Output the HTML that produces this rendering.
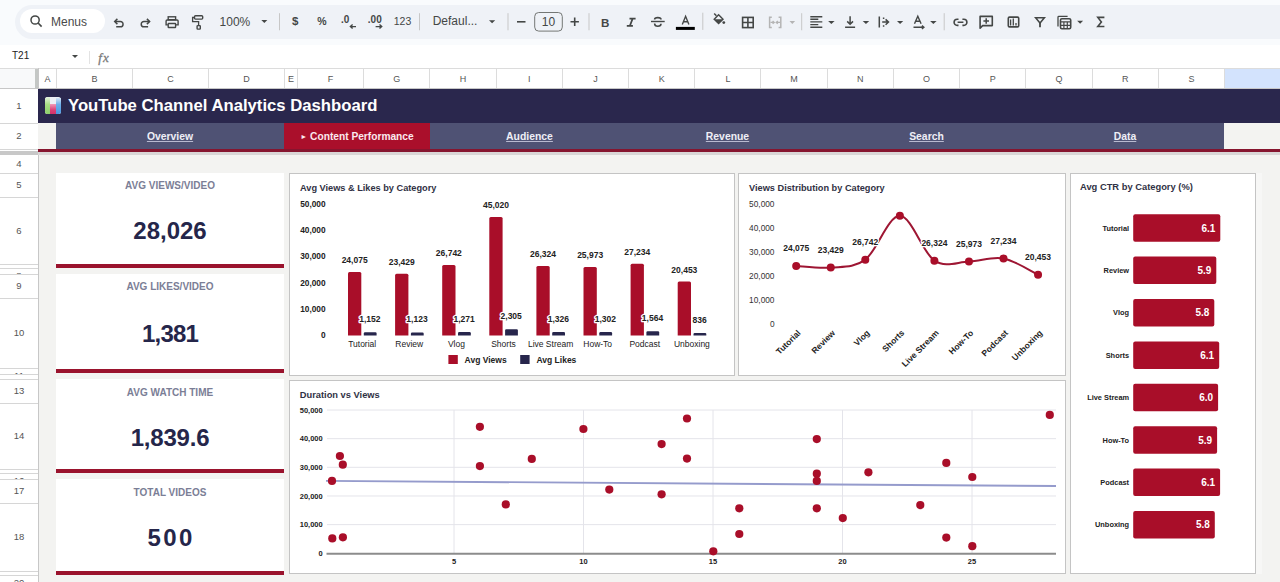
<!DOCTYPE html><html><head><meta charset="utf-8"><style>
*{margin:0;padding:0;box-sizing:border-box}
html,body{width:1280px;height:582px;overflow:hidden;background:#f9fbfd;font-family:"Liberation Sans", sans-serif;}
.a{position:absolute}
</style></head><body><div class="a" style="left:15px;top:5px;width:1280px;height:34px;background:#eff2f7;border-radius:17px 0 0 17px"></div><div class="a" style="left:20px;top:9px;width:85px;height:24px;background:#fff;border-radius:12px"></div><div class="a" style="left:51px;top:15px;font-size:12px;color:#4a4a4a;line-height:14px">Menus</div><svg class="a" style="left:0;top:0" width="1280" height="45" viewBox="0 0 1280 45" font-family="Liberation Sans, sans-serif"><circle cx="35.1" cy="20" r="4.1" fill="none" stroke="#444746" stroke-width="1.5"/><line x1="38.1" y1="23" x2="41.6" y2="26.6" stroke="#444746" stroke-width="1.6"/><path d="M117.4,18.9 L114.7,21.5 L117.4,24.1" fill="none" stroke="#444746" stroke-width="1.5"/><path d="M115,21.5 H120.4 A2.65,2.65 0 0 1 120.4,26.8 H116.2" fill="none" stroke="#444746" stroke-width="1.5"/><path d="M146.9,18.9 L149.6,21.5 L146.9,24.1" fill="none" stroke="#444746" stroke-width="1.5"/><path d="M149.3,21.5 H143.9 A2.65,2.65 0 0 0 143.9,26.8 H148.1" fill="none" stroke="#444746" stroke-width="1.5"/><rect x="168.2" y="16.8" width="7.4" height="2.9" fill="none" stroke="#444746" stroke-width="1.4"/><path d="M167.9,24.9 H166.1 V21.1 Q166.1,20 167.2,20 H177 Q178.1,20 178.1,21.1 V24.9 H176" fill="none" stroke="#444746" stroke-width="1.4"/><rect x="168.2" y="23.5" width="7.4" height="4" rx="0.5" fill="#eff2f7" stroke="#444746" stroke-width="1.4"/><rect x="194.5" y="15.8" width="8.2" height="3.3" rx="1" fill="none" stroke="#444746" stroke-width="1.4"/><path d="M194.5,17.5 H192.6 V21.7 H198.6 V25.4" fill="none" stroke="#444746" stroke-width="1.3"/><rect x="197.1" y="25.6" width="3.2" height="3.5" rx="0.6" fill="none" stroke="#444746" stroke-width="1.4"/><text x="219.6" y="25.9" font-size="12" fill="#444746">100%</text><path d="M261.3,20.1 L267.3,20.1 L264.3,23.1 Z" fill="#444746"/><line x1="279.5" y1="13.2" x2="279.5" y2="30.3" stroke="#c7c7c7" stroke-width="1"/><text x="295.2" y="25.2" font-size="11.5" font-weight="bold" fill="#444746" text-anchor="middle">$</text><text x="321.9" y="24.7" font-size="10.5" font-weight="bold" fill="#444746" text-anchor="middle">%</text><text x="341" y="23" font-size="10" font-weight="bold" fill="#444746">.0</text><path d="M356,26.6 H350.5 M352.6,24.6 L350.4,26.6 L352.6,28.6" fill="none" stroke="#444746" stroke-width="1.4"/><text x="367.8" y="23" font-size="10" font-weight="bold" fill="#444746">.00</text><path d="M375.6,26.6 H381.6 M379.5,24.6 L381.7,26.6 L379.5,28.6" fill="none" stroke="#444746" stroke-width="1.4"/><text x="402.5" y="24.8" font-size="10.5" fill="#444746" text-anchor="middle">123</text><line x1="419.5" y1="13.2" x2="419.5" y2="30.3" stroke="#c7c7c7" stroke-width="1"/><text x="432.7" y="25" font-size="12" fill="#444746">Defaul...</text><path d="M489,20.3 L495.2,20.3 L492.1,23.3 Z" fill="#444746"/><line x1="508" y1="13.2" x2="508" y2="30.3" stroke="#c7c7c7" stroke-width="1"/><line x1="517" y1="21.8" x2="525.5" y2="21.8" stroke="#444746" stroke-width="1.6"/><rect x="534.7" y="12.5" width="27.6" height="18.6" rx="4" fill="none" stroke="#747775" stroke-width="1"/><text x="548.4" y="26" font-size="12" fill="#444746" text-anchor="middle">10</text><path d="M570.5,21.8 H578.9 M574.7,17.6 V26" stroke="#444746" stroke-width="1.6"/><line x1="589" y1="13.2" x2="589" y2="30.3" stroke="#c7c7c7" stroke-width="1"/><text x="605.2" y="26.5" font-size="11.6" font-weight="bold" fill="#444746" text-anchor="middle">B</text><path d="M629.5,18.7 H635.6 M626.8,25.8 H632.9 M632.6,18.7 L629.9,25.8" fill="none" stroke="#444746" stroke-width="1.8"/><path d="M651,21.5 H664.7" stroke="#444746" stroke-width="1.4"/><path d="M661,19.6 Q661,17.6 657.8,17.6 Q654.6,17.6 654.6,19.4" fill="none" stroke="#444746" stroke-width="1.6"/><path d="M654.6,23.6 Q654.6,26.3 657.8,26.3 Q661,26.3 661,23.8" fill="none" stroke="#444746" stroke-width="1.6"/><path d="M682.3,24.4 L685.6,16.3 L688.9,24.4 M683.5,21.7 H687.7" fill="none" stroke="#444746" stroke-width="1.4"/><rect x="675.9" y="26.9" width="18.9" height="3" fill="#000"/><line x1="702.8" y1="12.7" x2="702.8" y2="29.9" stroke="#c7c7c7" stroke-width="1"/><path d="M714.2,13.5 L716.4,15.7" stroke="#444746" stroke-width="1.5"/><path d="M713.2,19.2 L718.6,13.8 L724,19.2 L718.6,24.6 Z" fill="#444746"/><path d="M715.2,19.2 L718.6,15.8 L722,19.2 Z" fill="#eff2f7"/><circle cx="723.8" cy="22.6" r="1.4" fill="#444746"/><rect x="742.6" y="17.4" width="10.6" height="10.2" fill="none" stroke="#444746" stroke-width="1.6"/><path d="M747.9,17.4 V27.6 M742.6,22.5 H753.2" stroke="#444746" stroke-width="1.6"/><path d="M771.8,17.2 H769.6 V27.6 H771.8 M778.6,17.2 H780.8 V27.6 H778.6" fill="none" stroke="#b4b4b4" stroke-width="1.5"/><path d="M770.5,22.4 H774 M772.6,21 L774.2,22.4 L772.6,23.8 M780,22.4 H776.4 M777.8,21 L776.2,22.4 L777.8,23.8" fill="none" stroke="#b4b4b4" stroke-width="1.3"/><path d="M789.5,20.9 L795.1,20.9 L792.3,23.9 Z" fill="#b4b4b4"/><line x1="801.7" y1="13.2" x2="801.7" y2="30.3" stroke="#c7c7c7" stroke-width="1"/><path d="M810.3,16.8 H822.3 M810.3,19.3 H818.3 M810.3,21.9 H822.3 M810.3,24.6 H818.3 M810.3,27.2 H822.3" stroke="#444746" stroke-width="1.4"/><path d="M828.1,20.9 L834.6,20.9 L831.35,23.9 Z" fill="#444746"/><path d="M845.1,27.2 H855.1 M850.1,16.2 V24.3 M847.2,21.4 L850.1,24.3 L853,21.4" fill="none" stroke="#444746" stroke-width="1.5"/><path d="M862.7,20.9 L869.2,20.9 L865.95,23.9 Z" fill="#444746"/><path d="M879.3,16.6 V27.6 M882.2,22.1 H888.3 M885.6,19.4 L888.5,22.1 L885.6,24.8 M883.6,17.4 V19 M883.6,25.2 V26.8" fill="none" stroke="#444746" stroke-width="1.5"/><path d="M897,20.9 L903.2,20.9 L900.1,23.9 Z" fill="#444746"/><path d="M914.5,23.7 L917.8,16.2 L921.1,23.7 M915.7,21.2 H919.9 M913.5,27.3 H923.6 M921.9,25.6 L923.9,27.3 L921.9,29" fill="none" stroke="#444746" stroke-width="1.4"/><path d="M930.1,20.9 L936.6,20.9 L933.35,23.9 Z" fill="#444746"/><line x1="944.2" y1="13.2" x2="944.2" y2="30.3" stroke="#c7c7c7" stroke-width="1"/><path d="M958.5,19.2 H957.2 A3.1,3.1 0 0 0 957.2,25.4 H958.5 M962.4,19.2 H963.8 A3.1,3.1 0 0 1 963.8,25.4 H962.4 M957.6,22.3 H963.4" fill="none" stroke="#444746" stroke-width="1.6"/><path d="M980.1,28.2 V16.4 H992.3 V25.6 H982.6 Z" fill="none" stroke="#444746" stroke-width="1.6" stroke-linejoin="round"/><path d="M983.4,21 H989 M986.2,18.2 V23.8" stroke="#444746" stroke-width="1.5"/><rect x="1008.3" y="17.1" width="10.4" height="9.8" rx="1.2" fill="none" stroke="#444746" stroke-width="1.6"/><path d="M1010.6,19.6 V25.4 M1013.3,18.6 V25.4 M1016,23 V25.4" stroke="#444746" stroke-width="1.3"/><path d="M1035.6,17.8 H1044.4 L1040,23 Z" fill="none" stroke="#444746" stroke-width="1.5" stroke-linejoin="miter"/><path d="M1040,22.6 V27.2" stroke="#444746" stroke-width="1.8"/><path d="M1058,26.4 V17.2 Q1058,16.4 1058.8,16.4 H1067.6" fill="none" stroke="#444746" stroke-width="1.3"/><rect x="1060.5" y="18.7" width="10.2" height="10" rx="1.4" fill="none" stroke="#444746" stroke-width="1.6"/><path d="M1060.5,21.9 H1070.7 M1060.5,25.4 H1070.7 M1063.9,21.9 V28.7 M1067.3,21.9 V28.7" stroke="#444746" stroke-width="1.2"/><path d="M1077.1,20.7 L1083.1,20.7 L1080.1,23.7 Z" fill="#444746"/><path d="M1104.4,17.4 H1097.8 L1101.4,22 L1097.8,26.5 H1104.4" fill="none" stroke="#444746" stroke-width="1.6"/></svg><div class="a" style="left:0;top:45px;width:1280px;height:23px;background:#fff"></div><div class="a" style="left:12px;top:50px;font-size:10px;color:#222;line-height:12px">T21</div><div class="a" style="left:89px;top:51px;width:1px;height:13px;background:#e3e3e3"></div><svg class="a" style="left:0;top:45px" width="140" height="23" viewBox="0 45 140 23"><path d="M72,55 H78 L75,58 Z" fill="#444746"/><text x="98.3" y="62" font-family="Liberation Serif, serif" font-style="italic" font-size="13" letter-spacing="1.2" stroke="#7a7a7a" stroke-width="0.3" fill="#7a7a7a">fx</text></svg><div class="a" style="left:0;top:68px;width:1280px;height:21px;background:#fff;border-top:1px solid #dcdcdc"></div><div class="a" style="left:0;top:69px;width:35px;height:20px;background:#f8f9fa"></div><div class="a" style="left:35px;top:69px;width:3px;height:20px;background:#c4c7c5"></div><div class="a" style="left:1224px;top:69px;width:56px;height:20px;background:#d3e3fd"></div><div class="a" style="left:56px;top:69px;width:1px;height:20px;background:#dcdcdc"></div><div class="a" style="left:38.5px;top:72.5px;width:18.0px;text-align:center;font-size:9px;line-height:12px;color:#555">A</div><div class="a" style="left:132px;top:69px;width:1px;height:20px;background:#dcdcdc"></div><div class="a" style="left:56.5px;top:72.5px;width:76.0px;text-align:center;font-size:9px;line-height:12px;color:#555">B</div><div class="a" style="left:208px;top:69px;width:1px;height:20px;background:#dcdcdc"></div><div class="a" style="left:132.5px;top:72.5px;width:76.0px;text-align:center;font-size:9px;line-height:12px;color:#555">C</div><div class="a" style="left:284px;top:69px;width:1px;height:20px;background:#dcdcdc"></div><div class="a" style="left:208.5px;top:72.5px;width:76.0px;text-align:center;font-size:9px;line-height:12px;color:#555">D</div><div class="a" style="left:297px;top:69px;width:1px;height:20px;background:#dcdcdc"></div><div class="a" style="left:284.5px;top:72.5px;width:13.0px;text-align:center;font-size:9px;line-height:12px;color:#555">E</div><div class="a" style="left:363px;top:69px;width:1px;height:20px;background:#dcdcdc"></div><div class="a" style="left:297.5px;top:72.5px;width:66.2px;text-align:center;font-size:9px;line-height:12px;color:#555">F</div><div class="a" style="left:429px;top:69px;width:1px;height:20px;background:#dcdcdc"></div><div class="a" style="left:363.7px;top:72.5px;width:66.2px;text-align:center;font-size:9px;line-height:12px;color:#555">G</div><div class="a" style="left:496px;top:69px;width:1px;height:20px;background:#dcdcdc"></div><div class="a" style="left:429.9px;top:72.5px;width:66.2px;text-align:center;font-size:9px;line-height:12px;color:#555">H</div><div class="a" style="left:562px;top:69px;width:1px;height:20px;background:#dcdcdc"></div><div class="a" style="left:496.1px;top:72.5px;width:66.2px;text-align:center;font-size:9px;line-height:12px;color:#555">I</div><div class="a" style="left:628px;top:69px;width:1px;height:20px;background:#dcdcdc"></div><div class="a" style="left:562.4px;top:72.5px;width:66.2px;text-align:center;font-size:9px;line-height:12px;color:#555">J</div><div class="a" style="left:694px;top:69px;width:1px;height:20px;background:#dcdcdc"></div><div class="a" style="left:628.6px;top:72.5px;width:66.2px;text-align:center;font-size:9px;line-height:12px;color:#555">K</div><div class="a" style="left:760px;top:69px;width:1px;height:20px;background:#dcdcdc"></div><div class="a" style="left:694.8px;top:72.5px;width:66.2px;text-align:center;font-size:9px;line-height:12px;color:#555">L</div><div class="a" style="left:827px;top:69px;width:1px;height:20px;background:#dcdcdc"></div><div class="a" style="left:761.0px;top:72.5px;width:66.2px;text-align:center;font-size:9px;line-height:12px;color:#555">M</div><div class="a" style="left:893px;top:69px;width:1px;height:20px;background:#dcdcdc"></div><div class="a" style="left:827.2px;top:72.5px;width:66.2px;text-align:center;font-size:9px;line-height:12px;color:#555">N</div><div class="a" style="left:959px;top:69px;width:1px;height:20px;background:#dcdcdc"></div><div class="a" style="left:893.4px;top:72.5px;width:66.2px;text-align:center;font-size:9px;line-height:12px;color:#555">O</div><div class="a" style="left:1025px;top:69px;width:1px;height:20px;background:#dcdcdc"></div><div class="a" style="left:959.6px;top:72.5px;width:66.2px;text-align:center;font-size:9px;line-height:12px;color:#555">P</div><div class="a" style="left:1092px;top:69px;width:1px;height:20px;background:#dcdcdc"></div><div class="a" style="left:1025.9px;top:72.5px;width:66.2px;text-align:center;font-size:9px;line-height:12px;color:#555">Q</div><div class="a" style="left:1158px;top:69px;width:1px;height:20px;background:#dcdcdc"></div><div class="a" style="left:1092.1px;top:72.5px;width:66.2px;text-align:center;font-size:9px;line-height:12px;color:#555">R</div><div class="a" style="left:1224px;top:69px;width:1px;height:20px;background:#dcdcdc"></div><div class="a" style="left:1158.3px;top:72.5px;width:66.2px;text-align:center;font-size:9px;line-height:12px;color:#555">S</div><div class="a" style="left:1280px;top:69px;width:1px;height:20px;background:#dcdcdc"></div><div class="a" style="left:38px;top:89px;width:1242px;height:493px;background:#f3f3f1"></div><div class="a" style="left:0;top:89px;width:38px;height:493px;background:#fff"></div><div class="a" style="left:38px;top:68px;width:1px;height:514px;background:#c7c7c7"></div><div class="a" style="left:0;top:89px;width:38px;height:34px;overflow:hidden"><div class="a" style="left:0;top:11.0px;width:38px;text-align:center;font-size:9.5px;line-height:12px;color:#555">1</div></div><div class="a" style="left:0;top:123px;width:38px;height:1px;background:#d6d6d6"></div><div class="a" style="left:0;top:123px;width:38px;height:26px;overflow:hidden"><div class="a" style="left:0;top:7.0px;width:38px;text-align:center;font-size:9.5px;line-height:12px;color:#555">2</div></div><div class="a" style="left:0;top:149px;width:38px;height:1px;background:#d6d6d6"></div><div class="a" style="left:0;top:155px;width:38px;height:18px;overflow:hidden"><div class="a" style="left:0;top:3.0px;width:38px;text-align:center;font-size:9.5px;line-height:12px;color:#555">4</div></div><div class="a" style="left:0;top:173px;width:38px;height:1px;background:#d6d6d6"></div><div class="a" style="left:0;top:173px;width:38px;height:24px;overflow:hidden"><div class="a" style="left:0;top:6.0px;width:38px;text-align:center;font-size:9.5px;line-height:12px;color:#555">5</div></div><div class="a" style="left:0;top:197px;width:38px;height:1px;background:#d6d6d6"></div><div class="a" style="left:0;top:197px;width:38px;height:67px;overflow:hidden"><div class="a" style="left:0;top:27.5px;width:38px;text-align:center;font-size:9.5px;line-height:12px;color:#555">6</div></div><div class="a" style="left:0;top:264px;width:38px;height:1px;background:#d6d6d6"></div><div class="a" style="left:0;top:264px;width:38px;height:4px;overflow:hidden"><div class="a" style="left:0;top:1.5px;width:38px;text-align:center;font-size:9.5px;line-height:12px;color:#555">7</div></div><div class="a" style="left:0;top:268px;width:38px;height:1px;background:#d6d6d6"></div><div class="a" style="left:0;top:268px;width:38px;height:6px;overflow:hidden"><div class="a" style="left:0;top:1.5px;width:38px;text-align:center;font-size:9.5px;line-height:12px;color:#555">8</div></div><div class="a" style="left:0;top:274px;width:38px;height:1px;background:#d6d6d6"></div><div class="a" style="left:0;top:274px;width:38px;height:24px;overflow:hidden"><div class="a" style="left:0;top:6.0px;width:38px;text-align:center;font-size:9.5px;line-height:12px;color:#555">9</div></div><div class="a" style="left:0;top:298px;width:38px;height:1px;background:#d6d6d6"></div><div class="a" style="left:0;top:298px;width:38px;height:70px;overflow:hidden"><div class="a" style="left:0;top:29.0px;width:38px;text-align:center;font-size:9.5px;line-height:12px;color:#555">10</div></div><div class="a" style="left:0;top:368px;width:38px;height:1px;background:#d6d6d6"></div><div class="a" style="left:0;top:368px;width:38px;height:6px;overflow:hidden"><div class="a" style="left:0;top:1.5px;width:38px;text-align:center;font-size:9.5px;line-height:12px;color:#555">11</div></div><div class="a" style="left:0;top:374px;width:38px;height:1px;background:#d6d6d6"></div><div class="a" style="left:0;top:374px;width:38px;height:5px;overflow:hidden"><div class="a" style="left:0;top:1.5px;width:38px;text-align:center;font-size:9.5px;line-height:12px;color:#555">12</div></div><div class="a" style="left:0;top:379px;width:38px;height:1px;background:#d6d6d6"></div><div class="a" style="left:0;top:379px;width:38px;height:24px;overflow:hidden"><div class="a" style="left:0;top:6.0px;width:38px;text-align:center;font-size:9.5px;line-height:12px;color:#555">13</div></div><div class="a" style="left:0;top:403px;width:38px;height:1px;background:#d6d6d6"></div><div class="a" style="left:0;top:403px;width:38px;height:66px;overflow:hidden"><div class="a" style="left:0;top:27.0px;width:38px;text-align:center;font-size:9.5px;line-height:12px;color:#555">14</div></div><div class="a" style="left:0;top:469px;width:38px;height:1px;background:#d6d6d6"></div><div class="a" style="left:0;top:469px;width:38px;height:4px;overflow:hidden"><div class="a" style="left:0;top:1.5px;width:38px;text-align:center;font-size:9.5px;line-height:12px;color:#555">15</div></div><div class="a" style="left:0;top:473px;width:38px;height:1px;background:#d6d6d6"></div><div class="a" style="left:0;top:473px;width:38px;height:6px;overflow:hidden"><div class="a" style="left:0;top:1.5px;width:38px;text-align:center;font-size:9.5px;line-height:12px;color:#555">16</div></div><div class="a" style="left:0;top:479px;width:38px;height:1px;background:#d6d6d6"></div><div class="a" style="left:0;top:479px;width:38px;height:24px;overflow:hidden"><div class="a" style="left:0;top:6.0px;width:38px;text-align:center;font-size:9.5px;line-height:12px;color:#555">17</div></div><div class="a" style="left:0;top:503px;width:38px;height:1px;background:#d6d6d6"></div><div class="a" style="left:0;top:503px;width:38px;height:68px;overflow:hidden"><div class="a" style="left:0;top:28.0px;width:38px;text-align:center;font-size:9.5px;line-height:12px;color:#555">18</div></div><div class="a" style="left:0;top:571px;width:38px;height:1px;background:#d6d6d6"></div><div class="a" style="left:0;top:571px;width:38px;height:4px;overflow:hidden"><div class="a" style="left:0;top:1.5px;width:38px;text-align:center;font-size:9.5px;line-height:12px;color:#555">19</div></div><div class="a" style="left:0;top:575px;width:38px;height:1px;background:#d6d6d6"></div><div class="a" style="left:0;top:575px;width:38px;height:16px;overflow:hidden"><div class="a" style="left:0;top:2.0px;width:38px;text-align:center;font-size:9.5px;line-height:12px;color:#555">20</div></div><div class="a" style="left:0;top:591px;width:38px;height:1px;background:#d6d6d6"></div><div class="a" style="left:0;top:151px;width:38px;height:4px;background:#c8c8c8"></div><div class="a" style="left:0;top:88px;width:1280px;height:1px;background:#c7c7c7"></div><div class="a" style="left:38px;top:89px;width:1242px;height:34px;background:#2a274d"></div><div class="a" style="left:68px;top:96px;font-size:16.7px;font-weight:bold;color:#fff;line-height:20px;white-space:nowrap">YouTube Channel Analytics Dashboard</div><div class="a" style="left:45px;top:97px;width:16px;height:17px;border-radius:2.5px;overflow:hidden;background:#eef0f6"><div class="a" style="left:0;top:0;width:5.4px;height:17px;background:linear-gradient(180deg,#e6f2e0 0%,#a8dc84 45%,#8ccf6a 100%)"></div><div class="a" style="left:5.4px;top:7px;width:5.3px;height:10px;background:linear-gradient(180deg,#f29ab8 0%,#dc3f76 60%,#d0336a 100%)"></div><div class="a" style="left:10.7px;top:1px;width:5.3px;height:16px;background:linear-gradient(180deg,#d6e6f6 0%,#6fb0ea 40%,#4a98e0 100%)"></div></div><div class="a" style="left:38px;top:123px;width:18px;height:26px;background:#f3f3f1"></div><div class="a" style="left:56px;top:123px;width:1168px;height:26px;background:#4f5274"></div><div class="a" style="left:1224px;top:123px;width:56px;height:26px;background:#f3f3f1"></div><div class="a" style="left:284px;top:123px;width:146px;height:28px;background:#aa0f2b"></div><div class="a" style="left:38px;top:149px;width:1242px;height:3px;background:#86152f"></div><div class="a" style="left:38px;top:152px;width:1242px;height:3px;background:#d9d6d6"></div><div class="a" style="left:56px;top:130.4px;width:228px;text-align:center;font-size:10.4px;font-weight:bold;line-height:13px;color:#eeeef6;text-decoration:underline;text-decoration-color:#b9bad0">Overview</div><div class="a" style="left:430px;top:130.4px;width:199px;text-align:center;font-size:10.4px;font-weight:bold;line-height:13px;color:#eeeef6;text-decoration:underline;text-decoration-color:#b9bad0">Audience</div><div class="a" style="left:628px;top:130.4px;width:199px;text-align:center;font-size:10.4px;font-weight:bold;line-height:13px;color:#eeeef6;text-decoration:underline;text-decoration-color:#b9bad0">Revenue</div><div class="a" style="left:827px;top:130.4px;width:199px;text-align:center;font-size:10.4px;font-weight:bold;line-height:13px;color:#eeeef6;text-decoration:underline;text-decoration-color:#b9bad0">Search</div><div class="a" style="left:1026px;top:130.4px;width:198px;text-align:center;font-size:10.4px;font-weight:bold;line-height:13px;color:#eeeef6;text-decoration:underline;text-decoration-color:#b9bad0">Data</div><div class="a" style="left:284px;top:130px;width:146px;text-align:center;font-size:10.2px;font-weight:bold;line-height:13px;color:#fbe9ee;white-space:nowrap"><span style="font-size:7px;position:relative;top:-1px">&#9658;</span> Content Performance</div><div class="a" style="left:1256px;top:173px;width:6px;height:401px;background:#f7f7f6"></div><div class="a" style="left:56px;top:173px;width:228px;height:91px;background:#fff"></div><div class="a" style="left:56px;top:264px;width:228px;height:4px;background:#9a132d"></div><div class="a" style="left:56px;top:180.0px;width:228px;text-align:center;font-size:10px;font-weight:bold;line-height:12px;color:#7b7e96">AVG VIEWS/VIDEO</div><div class="a" style="left:56px;top:216.5px;width:228px;padding-left:0.0px;letter-spacing:0.0px;text-align:center;font-size:24px;font-weight:bold;line-height:28px;color:#25264a">28,026</div><div class="a" style="left:56px;top:274px;width:228px;height:95px;background:#fff"></div><div class="a" style="left:56px;top:369px;width:228px;height:4px;background:#9a132d"></div><div class="a" style="left:56px;top:281.0px;width:228px;text-align:center;font-size:10px;font-weight:bold;line-height:12px;color:#7b7e96">AVG LIKES/VIDEO</div><div class="a" style="left:56px;top:320.3px;width:228px;padding-left:-0.8px;letter-spacing:-0.8px;text-align:center;font-size:24px;font-weight:bold;line-height:28px;color:#25264a">1,381</div><div class="a" style="left:56px;top:379px;width:228px;height:90px;background:#fff"></div><div class="a" style="left:56px;top:469px;width:228px;height:4px;background:#9a132d"></div><div class="a" style="left:56px;top:387.0px;width:228px;text-align:center;font-size:10px;font-weight:bold;line-height:12px;color:#7b7e96">AVG WATCH TIME</div><div class="a" style="left:56px;top:423.7px;width:228px;padding-left:-0.2px;letter-spacing:-0.2px;text-align:center;font-size:24px;font-weight:bold;line-height:28px;color:#25264a">1,839.6</div><div class="a" style="left:56px;top:479px;width:228px;height:92px;background:#fff"></div><div class="a" style="left:56px;top:571px;width:228px;height:4px;background:#9a132d"></div><div class="a" style="left:56px;top:486.5px;width:228px;text-align:center;font-size:10px;font-weight:bold;line-height:12px;color:#7b7e96">TOTAL VIDEOS</div><div class="a" style="left:56px;top:523.7px;width:228px;padding-left:2.4px;letter-spacing:2.4px;text-align:center;font-size:24px;font-weight:bold;line-height:28px;color:#25264a">500</div><svg class="a" style="left:0;top:0" width="1280" height="582" viewBox="0 0 1280 582" font-family="Liberation Sans, sans-serif"><rect x="289.5" y="173.5" width="445" height="202" fill="#fff" stroke="#c4c4c4" stroke-width="1"/><text x="300.00" y="190.90" font-size="9.2" font-weight="bold" fill="#303144" text-anchor="start" >Avg Views &amp; Likes by Category</text><text x="325.60" y="206.80" font-size="8.3" font-weight="bold" fill="#222" text-anchor="end" >50,000</text><text x="325.60" y="233.12" font-size="8.3" font-weight="bold" fill="#222" text-anchor="end" >40,000</text><text x="325.60" y="259.44" font-size="8.3" font-weight="bold" fill="#222" text-anchor="end" >30,000</text><text x="325.60" y="285.76" font-size="8.3" font-weight="bold" fill="#222" text-anchor="end" >20,000</text><text x="325.60" y="312.08" font-size="8.3" font-weight="bold" fill="#222" text-anchor="end" >10,000</text><text x="325.60" y="338.40" font-size="8.3" font-weight="bold" fill="#222" text-anchor="end" >0</text><path d="M348.00,335.4 V273.53 Q348.00,272.03 349.50,272.03 H359.80 Q361.30,272.03 361.30,273.53 V335.4 Z" fill="#a90e29"/><path d="M363.80,335.4 V333.57 Q363.80,332.37 365.00,332.37 H375.40 Q376.60,332.37 376.60,333.57 V335.4 Z" fill="#27264c"/><text x="354.65" y="263.03" font-size="8.5" font-weight="bold" fill="#222" text-anchor="middle" >24,075</text><text x="369.90" y="322.07" font-size="8.5" font-weight="bold" fill="#222" text-anchor="middle" stroke="#fff" stroke-width="2.5" paint-order="stroke" stroke-linejoin="round">1,152</text><text x="362.20" y="347.00" font-size="8.5" font-weight="normal" fill="#222" text-anchor="middle" >Tutorial</text><path d="M395.10,335.4 V275.23 Q395.10,273.73 396.60,273.73 H406.90 Q408.40,273.73 408.40,275.23 V335.4 Z" fill="#a90e29"/><path d="M410.90,335.4 V333.64 Q410.90,332.44 412.10,332.44 H422.50 Q423.70,332.44 423.70,333.64 V335.4 Z" fill="#27264c"/><text x="401.75" y="264.73" font-size="8.5" font-weight="bold" fill="#222" text-anchor="middle" >23,429</text><text x="417.00" y="322.14" font-size="8.5" font-weight="bold" fill="#222" text-anchor="middle" stroke="#fff" stroke-width="2.5" paint-order="stroke" stroke-linejoin="round">1,123</text><text x="409.30" y="347.00" font-size="8.5" font-weight="normal" fill="#222" text-anchor="middle" >Review</text><path d="M442.20,335.4 V266.52 Q442.20,265.02 443.70,265.02 H454.00 Q455.50,265.02 455.50,266.52 V335.4 Z" fill="#a90e29"/><path d="M458.00,335.4 V333.25 Q458.00,332.05 459.20,332.05 H469.60 Q470.80,332.05 470.80,333.25 V335.4 Z" fill="#27264c"/><text x="448.85" y="256.02" font-size="8.5" font-weight="bold" fill="#222" text-anchor="middle" >26,742</text><text x="464.10" y="321.75" font-size="8.5" font-weight="bold" fill="#222" text-anchor="middle" stroke="#fff" stroke-width="2.5" paint-order="stroke" stroke-linejoin="round">1,271</text><text x="456.40" y="347.00" font-size="8.5" font-weight="normal" fill="#222" text-anchor="middle" >Vlog</text><path d="M489.30,335.4 V218.41 Q489.30,216.91 490.80,216.91 H501.10 Q502.60,216.91 502.60,218.41 V335.4 Z" fill="#a90e29"/><path d="M505.10,335.4 V330.53 Q505.10,329.33 506.30,329.33 H516.70 Q517.90,329.33 517.90,330.53 V335.4 Z" fill="#27264c"/><text x="495.95" y="207.91" font-size="8.5" font-weight="bold" fill="#222" text-anchor="middle" >45,020</text><text x="511.20" y="319.03" font-size="8.5" font-weight="bold" fill="#222" text-anchor="middle" stroke="#fff" stroke-width="2.5" paint-order="stroke" stroke-linejoin="round">2,305</text><text x="503.50" y="347.00" font-size="8.5" font-weight="normal" fill="#222" text-anchor="middle" >Shorts</text><path d="M536.40,335.4 V267.62 Q536.40,266.12 537.90,266.12 H548.20 Q549.70,266.12 549.70,267.62 V335.4 Z" fill="#a90e29"/><path d="M552.20,335.4 V333.11 Q552.20,331.91 553.40,331.91 H563.80 Q565.00,331.91 565.00,333.11 V335.4 Z" fill="#27264c"/><text x="543.05" y="257.12" font-size="8.5" font-weight="bold" fill="#222" text-anchor="middle" >26,324</text><text x="558.30" y="321.61" font-size="8.5" font-weight="bold" fill="#222" text-anchor="middle" stroke="#fff" stroke-width="2.5" paint-order="stroke" stroke-linejoin="round">1,326</text><text x="550.60" y="347.00" font-size="8.5" font-weight="normal" fill="#222" text-anchor="middle" >Live Stream</text><path d="M583.50,335.4 V268.54 Q583.50,267.04 585.00,267.04 H595.30 Q596.80,267.04 596.80,268.54 V335.4 Z" fill="#a90e29"/><path d="M599.30,335.4 V333.17 Q599.30,331.97 600.50,331.97 H610.90 Q612.10,331.97 612.10,333.17 V335.4 Z" fill="#27264c"/><text x="590.15" y="258.04" font-size="8.5" font-weight="bold" fill="#222" text-anchor="middle" >25,973</text><text x="605.40" y="321.67" font-size="8.5" font-weight="bold" fill="#222" text-anchor="middle" stroke="#fff" stroke-width="2.5" paint-order="stroke" stroke-linejoin="round">1,302</text><text x="597.70" y="347.00" font-size="8.5" font-weight="normal" fill="#222" text-anchor="middle" >How-To</text><path d="M630.60,335.4 V265.22 Q630.60,263.72 632.10,263.72 H642.40 Q643.90,263.72 643.90,265.22 V335.4 Z" fill="#a90e29"/><path d="M646.40,335.4 V332.48 Q646.40,331.28 647.60,331.28 H658.00 Q659.20,331.28 659.20,332.48 V335.4 Z" fill="#27264c"/><text x="637.25" y="254.72" font-size="8.5" font-weight="bold" fill="#222" text-anchor="middle" >27,234</text><text x="652.50" y="320.98" font-size="8.5" font-weight="bold" fill="#222" text-anchor="middle" stroke="#fff" stroke-width="2.5" paint-order="stroke" stroke-linejoin="round">1,564</text><text x="644.80" y="347.00" font-size="8.5" font-weight="normal" fill="#222" text-anchor="middle" >Podcast</text><path d="M677.70,335.4 V283.07 Q677.70,281.57 679.20,281.57 H689.50 Q691.00,281.57 691.00,283.07 V335.4 Z" fill="#a90e29"/><path d="M693.50,335.4 V334.10 Q693.50,332.90 694.70,332.90 H705.10 Q706.30,332.90 706.30,334.10 V335.4 Z" fill="#27264c"/><text x="684.35" y="272.57" font-size="8.5" font-weight="bold" fill="#222" text-anchor="middle" >20,453</text><text x="699.60" y="322.60" font-size="8.5" font-weight="bold" fill="#222" text-anchor="middle" stroke="#fff" stroke-width="2.5" paint-order="stroke" stroke-linejoin="round">836</text><text x="691.90" y="347.00" font-size="8.5" font-weight="normal" fill="#222" text-anchor="middle" >Unboxing</text><rect x="448.4" y="355" width="9.4" height="9" fill="#a90e29"/><text x="464.60" y="362.60" font-size="8.5" font-weight="bold" fill="#222" text-anchor="start" >Avg Views</text><rect x="520.2" y="355" width="9.4" height="9" fill="#27264c"/><text x="536.50" y="362.60" font-size="8.5" font-weight="bold" fill="#222" text-anchor="start" >Avg Likes</text><rect x="738.5" y="173.5" width="327" height="202" fill="#fff" stroke="#c4c4c4" stroke-width="1"/><text x="749.10" y="191.10" font-size="9.2" font-weight="bold" fill="#303144" text-anchor="start" >Views Distribution by Category</text><text x="774.50" y="206.90" font-size="8.3" font-weight="normal" fill="#333" text-anchor="end" >50,000</text><text x="774.50" y="230.86" font-size="8.3" font-weight="normal" fill="#333" text-anchor="end" >40,000</text><text x="774.50" y="254.82" font-size="8.3" font-weight="normal" fill="#333" text-anchor="end" >30,000</text><text x="774.50" y="278.78" font-size="8.3" font-weight="normal" fill="#333" text-anchor="end" >20,000</text><text x="774.50" y="302.74" font-size="8.3" font-weight="normal" fill="#333" text-anchor="end" >10,000</text><text x="774.50" y="326.70" font-size="8.3" font-weight="normal" fill="#333" text-anchor="end" >0</text><path d="M796.20,266.02 C801.96,266.27 819.23,268.63 830.75,267.56 C842.27,266.50 853.78,268.25 865.30,259.63 C876.82,251.00 888.33,215.67 899.85,215.83 C911.37,216.00 922.88,253.02 934.40,260.63 C945.92,268.23 957.43,261.83 968.95,261.47 C980.47,261.11 991.98,256.24 1003.50,258.45 C1015.02,260.65 1032.29,271.99 1038.05,274.69" fill="none" stroke="#9e1633" stroke-width="2"/><circle cx="796.20" cy="266.02" r="4" fill="#a90e29"/><circle cx="830.75" cy="267.56" r="4" fill="#a90e29"/><circle cx="865.30" cy="259.63" r="4" fill="#a90e29"/><circle cx="899.85" cy="215.83" r="4" fill="#a90e29"/><circle cx="934.40" cy="260.63" r="4" fill="#a90e29"/><circle cx="968.95" cy="261.47" r="4" fill="#a90e29"/><circle cx="1003.50" cy="258.45" r="4" fill="#a90e29"/><circle cx="1038.05" cy="274.69" r="4" fill="#a90e29"/><text x="796.20" y="251.42" font-size="8.5" font-weight="bold" fill="#222" text-anchor="middle" stroke="#fff" stroke-width="2.5" paint-order="stroke" stroke-linejoin="round">24,075</text><text x="830.75" y="252.96" font-size="8.5" font-weight="bold" fill="#222" text-anchor="middle" stroke="#fff" stroke-width="2.5" paint-order="stroke" stroke-linejoin="round">23,429</text><text x="865.30" y="245.03" font-size="8.5" font-weight="bold" fill="#222" text-anchor="middle" stroke="#fff" stroke-width="2.5" paint-order="stroke" stroke-linejoin="round">26,742</text><text x="934.40" y="246.03" font-size="8.5" font-weight="bold" fill="#222" text-anchor="middle" stroke="#fff" stroke-width="2.5" paint-order="stroke" stroke-linejoin="round">26,324</text><text x="968.95" y="246.87" font-size="8.5" font-weight="bold" fill="#222" text-anchor="middle" stroke="#fff" stroke-width="2.5" paint-order="stroke" stroke-linejoin="round">25,973</text><text x="1003.50" y="243.85" font-size="8.5" font-weight="bold" fill="#222" text-anchor="middle" stroke="#fff" stroke-width="2.5" paint-order="stroke" stroke-linejoin="round">27,234</text><text x="1038.05" y="260.09" font-size="8.5" font-weight="bold" fill="#222" text-anchor="middle" stroke="#fff" stroke-width="2.5" paint-order="stroke" stroke-linejoin="round">20,453</text><text transform="translate(801.20,333.5) rotate(-45)" font-size="8.5" font-weight="bold" fill="#222" text-anchor="end">Tutorial</text><text transform="translate(835.75,333.5) rotate(-45)" font-size="8.5" font-weight="bold" fill="#222" text-anchor="end">Review</text><text transform="translate(870.30,333.5) rotate(-45)" font-size="8.5" font-weight="bold" fill="#222" text-anchor="end">Vlog</text><text transform="translate(904.85,333.5) rotate(-45)" font-size="8.5" font-weight="bold" fill="#222" text-anchor="end">Shorts</text><text transform="translate(939.40,333.5) rotate(-45)" font-size="8.5" font-weight="bold" fill="#222" text-anchor="end">Live Stream</text><text transform="translate(973.95,333.5) rotate(-45)" font-size="8.5" font-weight="bold" fill="#222" text-anchor="end">How-To</text><text transform="translate(1008.50,333.5) rotate(-45)" font-size="8.5" font-weight="bold" fill="#222" text-anchor="end">Podcast</text><text transform="translate(1043.05,333.5) rotate(-45)" font-size="8.5" font-weight="bold" fill="#222" text-anchor="end">Unboxing</text><rect x="1070.5" y="173.5" width="185" height="400" fill="#fff" stroke="#c4c4c4" stroke-width="1"/><text x="1080.00" y="189.90" font-size="9.35" font-weight="bold" fill="#303144" text-anchor="start" >Avg CTR by Category (%)</text><rect x="1133.2" y="214.20" width="87.10" height="27.5" rx="2" fill="#a90e29"/><text x="1129.10" y="230.65" font-size="7.4" font-weight="bold" fill="#222" text-anchor="end" >Tutorial</text><text x="1215.30" y="231.55" font-size="10" font-weight="bold" fill="#fff" text-anchor="end" >6.1</text><rect x="1133.2" y="256.60" width="83.10" height="27.5" rx="2" fill="#a90e29"/><text x="1129.10" y="273.05" font-size="7.4" font-weight="bold" fill="#222" text-anchor="end" >Review</text><text x="1211.30" y="273.95" font-size="10" font-weight="bold" fill="#fff" text-anchor="end" >5.9</text><rect x="1133.2" y="299.00" width="81.10" height="27.5" rx="2" fill="#a90e29"/><text x="1129.10" y="315.45" font-size="7.4" font-weight="bold" fill="#222" text-anchor="end" >Vlog</text><text x="1209.30" y="316.35" font-size="10" font-weight="bold" fill="#fff" text-anchor="end" >5.8</text><rect x="1133.2" y="341.40" width="86.00" height="27.5" rx="2" fill="#a90e29"/><text x="1129.10" y="357.85" font-size="7.4" font-weight="bold" fill="#222" text-anchor="end" >Shorts</text><text x="1214.20" y="358.75" font-size="10" font-weight="bold" fill="#fff" text-anchor="end" >6.1</text><rect x="1133.2" y="383.80" width="84.90" height="27.5" rx="2" fill="#a90e29"/><text x="1129.10" y="400.25" font-size="7.4" font-weight="bold" fill="#222" text-anchor="end" >Live Stream</text><text x="1213.10" y="401.15" font-size="10" font-weight="bold" fill="#fff" text-anchor="end" >6.0</text><rect x="1133.2" y="426.20" width="83.90" height="27.5" rx="2" fill="#a90e29"/><text x="1129.10" y="442.65" font-size="7.4" font-weight="bold" fill="#222" text-anchor="end" >How-To</text><text x="1212.10" y="443.55" font-size="10" font-weight="bold" fill="#fff" text-anchor="end" >5.9</text><rect x="1133.2" y="468.60" width="86.90" height="27.5" rx="2" fill="#a90e29"/><text x="1129.10" y="485.05" font-size="7.4" font-weight="bold" fill="#222" text-anchor="end" >Podcast</text><text x="1215.10" y="485.95" font-size="10" font-weight="bold" fill="#fff" text-anchor="end" >6.1</text><rect x="1133.2" y="511.00" width="81.60" height="27.5" rx="2" fill="#a90e29"/><text x="1129.10" y="527.45" font-size="7.4" font-weight="bold" fill="#222" text-anchor="end" >Unboxing</text><text x="1209.80" y="528.35" font-size="10" font-weight="bold" fill="#fff" text-anchor="end" >5.8</text><rect x="289.5" y="380.5" width="776" height="193" fill="#fff" stroke="#c4c4c4" stroke-width="1"/><text x="299.80" y="397.90" font-size="9.3" font-weight="bold" fill="#303144" text-anchor="start" >Duration vs Views</text><line x1="327" y1="524.64" x2="1056" y2="524.64" stroke="#e4e4ea" stroke-width="1"/><line x1="327" y1="495.98" x2="1056" y2="495.98" stroke="#e4e4ea" stroke-width="1"/><line x1="327" y1="467.32" x2="1056" y2="467.32" stroke="#e4e4ea" stroke-width="1"/><line x1="327" y1="438.66" x2="1056" y2="438.66" stroke="#e4e4ea" stroke-width="1"/><line x1="327" y1="410.00" x2="1056" y2="410.00" stroke="#e4e4ea" stroke-width="1"/><line x1="454.00" y1="410.00" x2="454.00" y2="553.3" stroke="#e4e4ea" stroke-width="1"/><text x="454.00" y="563.70" font-size="7.5" font-weight="bold" fill="#222" text-anchor="middle" >5</text><line x1="583.50" y1="410.00" x2="583.50" y2="553.3" stroke="#e4e4ea" stroke-width="1"/><text x="583.50" y="563.70" font-size="7.5" font-weight="bold" fill="#222" text-anchor="middle" >10</text><line x1="713.00" y1="410.00" x2="713.00" y2="553.3" stroke="#e4e4ea" stroke-width="1"/><text x="713.00" y="563.70" font-size="7.5" font-weight="bold" fill="#222" text-anchor="middle" >15</text><line x1="842.50" y1="410.00" x2="842.50" y2="553.3" stroke="#e4e4ea" stroke-width="1"/><text x="842.50" y="563.70" font-size="7.5" font-weight="bold" fill="#222" text-anchor="middle" >20</text><line x1="972.00" y1="410.00" x2="972.00" y2="553.3" stroke="#e4e4ea" stroke-width="1"/><text x="972.00" y="563.70" font-size="7.5" font-weight="bold" fill="#222" text-anchor="middle" >25</text><text x="322.70" y="412.70" font-size="7.5" font-weight="bold" fill="#222" text-anchor="end" >50,000</text><text x="322.70" y="441.36" font-size="7.5" font-weight="bold" fill="#222" text-anchor="end" >40,000</text><text x="322.70" y="470.02" font-size="7.5" font-weight="bold" fill="#222" text-anchor="end" >30,000</text><text x="322.70" y="498.68" font-size="7.5" font-weight="bold" fill="#222" text-anchor="end" >20,000</text><text x="322.70" y="527.34" font-size="7.5" font-weight="bold" fill="#222" text-anchor="end" >10,000</text><text x="322.70" y="556.00" font-size="7.5" font-weight="bold" fill="#222" text-anchor="end" >0</text><line x1="326.5" y1="553.7" x2="1056" y2="553.7" stroke="#8c8c8c" stroke-width="2"/><line x1="326" y1="480.9" x2="1056" y2="486" stroke="#959bcc" stroke-width="1.9"/><circle cx="332" cy="480.9" r="4.1" fill="#a90e29"/><circle cx="339.9" cy="456" r="4.1" fill="#a90e29"/><circle cx="342.8" cy="464.7" r="4.1" fill="#a90e29"/><circle cx="332.3" cy="538.4" r="4.1" fill="#a90e29"/><circle cx="342.9" cy="537.3" r="4.1" fill="#a90e29"/><circle cx="479.9" cy="426.8" r="4.1" fill="#a90e29"/><circle cx="479.9" cy="466.1" r="4.1" fill="#a90e29"/><circle cx="505.8" cy="504.4" r="4.1" fill="#a90e29"/><circle cx="531.8" cy="458.9" r="4.1" fill="#a90e29"/><circle cx="583.4" cy="429" r="4.1" fill="#a90e29"/><circle cx="609.3" cy="489.6" r="4.1" fill="#a90e29"/><circle cx="661.6" cy="444.1" r="4.1" fill="#a90e29"/><circle cx="661.6" cy="494.3" r="4.1" fill="#a90e29"/><circle cx="687" cy="418.5" r="4.1" fill="#a90e29"/><circle cx="687" cy="458.6" r="4.1" fill="#a90e29"/><circle cx="713.3" cy="551.3" r="4.1" fill="#a90e29"/><circle cx="739.3" cy="508.3" r="4.1" fill="#a90e29"/><circle cx="739.3" cy="534" r="4.1" fill="#a90e29"/><circle cx="816.8" cy="439.1" r="4.1" fill="#a90e29"/><circle cx="816.8" cy="473.7" r="4.1" fill="#a90e29"/><circle cx="816.8" cy="480.9" r="4.1" fill="#a90e29"/><circle cx="816.8" cy="508.3" r="4.1" fill="#a90e29"/><circle cx="842.8" cy="518.1" r="4.1" fill="#a90e29"/><circle cx="868.4" cy="472.3" r="4.1" fill="#a90e29"/><circle cx="920.3" cy="505.1" r="4.1" fill="#a90e29"/><circle cx="946.3" cy="462.9" r="4.1" fill="#a90e29"/><circle cx="946.3" cy="537.6" r="4.1" fill="#a90e29"/><circle cx="972.3" cy="477" r="4.1" fill="#a90e29"/><circle cx="972.3" cy="546.2" r="4.1" fill="#a90e29"/><circle cx="1049.8" cy="414.9" r="4.1" fill="#a90e29"/></svg></body></html>
